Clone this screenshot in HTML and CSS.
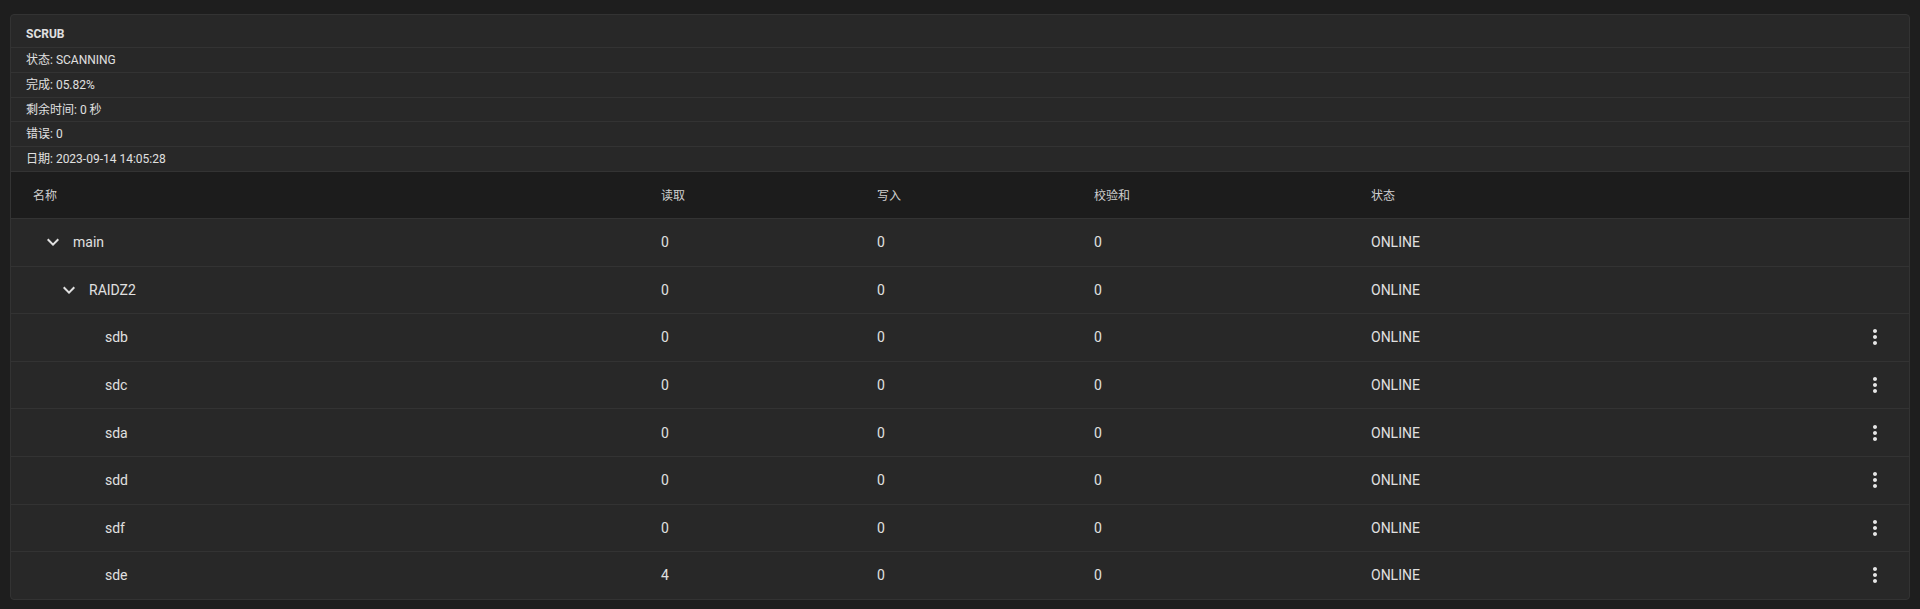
FILE: index.html
```html
<!DOCTYPE html>
<html lang="zh-CN">
<head>
    <meta charset="UTF-8">
    <meta name="viewport" content="width=device-width, initial-scale=1.0">
    <title>Pool Status</title>
    <link rel="stylesheet" href="styles.css">
</head>
<body>

<div class="pool-card">
    <!-- Scrub summary -->
    <div class="scrub-title">SCRUB</div>
    <div class="scrub-row">状态: SCANNING</div>
    <div class="scrub-row">完成: 05.82%</div>
    <div class="scrub-row">剩余时间: 0 秒</div>
    <div class="scrub-row">错误: 0</div>
    <div class="scrub-row">日期: 2023-09-14 14:05:28</div>

    <!-- Device tree -->
    <div class="tree-table">
        <div class="tree-row tree-head">
            <div class="cell">名称</div>
            <div class="cell">读取</div>
            <div class="cell">写入</div>
            <div class="cell">校验和</div>
            <div class="cell">状态</div>
            <div class="cell"></div>
        </div>
        <div id="treeBody"></div>
    </div>
</div>

<script>
    const devices = [
        { name: 'main', level: 0, group: true, read: 0, write: 0, cksum: 0, state: 'ONLINE' },
        { name: 'RAIDZ2', level: 1, group: true, read: 0, write: 0, cksum: 0, state: 'ONLINE' },
        { name: 'sdb', level: 2, read: 0, write: 0, cksum: 0, state: 'ONLINE' },
        { name: 'sdc', level: 2, read: 0, write: 0, cksum: 0, state: 'ONLINE' },
        { name: 'sda', level: 2, read: 0, write: 0, cksum: 0, state: 'ONLINE' },
        { name: 'sdd', level: 2, read: 0, write: 0, cksum: 0, state: 'ONLINE' },
        { name: 'sdf', level: 2, read: 0, write: 0, cksum: 0, state: 'ONLINE' },
        { name: 'sde', level: 2, read: 4, write: 0, cksum: 0, state: 'ONLINE' }
    ];

    const chevron = '<svg viewBox="0 0 24 24" width="24" height="24"><path fill="currentColor" d="M16.59 8.59L12 13.17 7.41 8.59 6 10l6 6 6-6z"/></svg>';
    const kebab = '<svg viewBox="0 0 24 24" width="24" height="24"><path fill="currentColor" d="M12 8c1.1 0 2-.9 2-2s-.9-2-2-2-2 .9-2 2 .9 2 2 2zm0 2c-1.1 0-2 .9-2 2s.9 2 2 2 2-.9 2-2-.9-2-2-2zm0 6c-1.1 0-2 .9-2 2s.9 2 2 2 2-.9 2-2-.9-2-2-2z"/></svg>';

    const treeBody = document.getElementById('treeBody');

    devices.forEach(dev => {
        const row = document.createElement('div');
        row.className = 'tree-row';
        row.innerHTML = `
            <div class="cell name-cell level-${dev.level}">
                <span class="toggle">${dev.group ? chevron : ''}</span>
                <span>${dev.name}</span>
            </div>
            <div class="cell">${dev.read}</div>
            <div class="cell">${dev.write}</div>
            <div class="cell">${dev.cksum}</div>
            <div class="cell">${dev.state}</div>
            <div class="cell action-cell">${dev.group ? '' : '<button class="menu-btn">' + kebab + '</button>'}</div>
        `;
        treeBody.appendChild(row);
    });
</script>

</body>
</html>
```

FILE: styles.css
```css
body {
    font-family: Roboto, "Noto Sans CJK SC", sans-serif;
    background-color: #1e1e1e;
    color: #e0e0e0;
    margin: 0;
    padding: 14px 10px 10px;
}

.pool-card {
    background-color: #282828;
    border: 1px solid #333333;
    border-radius: 4px;
    overflow: hidden;
}

.scrub-title {
    font-size: 12px;
    font-weight: bold;
    line-height: 14px;
    padding: 12px 15px 6px;
}

.scrub-row {
    font-size: 12px;
    line-height: 16px;
    height: 24.8px;
    box-sizing: border-box;
    padding: 4px 15px 0;
    border-top: 1px solid #333333;
}

.tree-row {
    display: grid;
    grid-template-columns: 628px 216px 217px 277px 1fr 48px;
    align-items: center;
    height: 47.6px;
    box-sizing: border-box;
    padding: 0 10px 0 22px;
    border-top: 1px solid #333333;
    font-size: 14px;
}

.tree-head {
    background-color: #1c1c1c;
    font-size: 12px;
    color: #cfcfcf;
    height: 47px;
}

.name-cell {
    display: flex;
    align-items: center;
    gap: 8px;
}

.level-0 { padding-left: 8px; }
.level-1 { padding-left: 24px; }
.level-2 { padding-left: 40px; }

.toggle {
    width: 24px;
    height: 24px;
    color: #e0e0e0;
}

.toggle svg {
    display: block;
}

.action-cell {
    display: flex;
    justify-content: center;
}

.menu-btn {
    background: none;
    border: none;
    padding: 0;
    color: #e6e6e6;
    cursor: pointer;
    width: 24px;
    height: 24px;
}

.menu-btn svg {
    display: block;
}
```
